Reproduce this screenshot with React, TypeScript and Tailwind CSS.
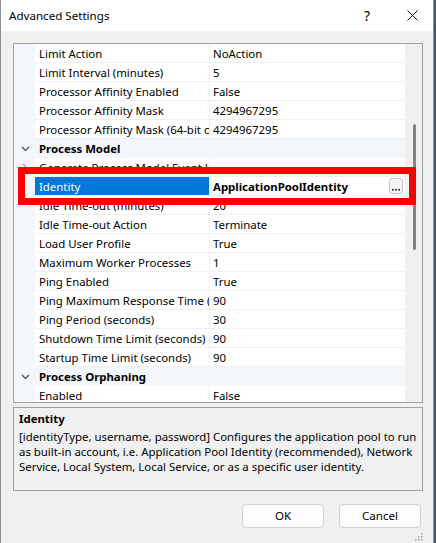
import React from "react";

type Row =
  | { kind: "cat"; name: string }
  | { kind: "prop"; name: string; value: string; collapsed?: boolean; selected?: boolean };

const rows: Row[] = [
  { kind: "prop", name: "Limit Action", value: "NoAction" },
  { kind: "prop", name: "Limit Interval (minutes)", value: "5" },
  { kind: "prop", name: "Processor Affinity Enabled", value: "False" },
  { kind: "prop", name: "Processor Affinity Mask", value: "4294967295" },
  { kind: "prop", name: "Processor Affinity Mask (64-bit option)", value: "4294967295" },
  { kind: "cat", name: "Process Model" },
  { kind: "prop", name: "Generate Process Model Event Log Entry", value: "", collapsed: true },
  { kind: "prop", name: "Identity", value: "ApplicationPoolIdentity", selected: true },
  { kind: "prop", name: "Idle Time-out (minutes)", value: "20" },
  { kind: "prop", name: "Idle Time-out Action", value: "Terminate" },
  { kind: "prop", name: "Load User Profile", value: "True" },
  { kind: "prop", name: "Maximum Worker Processes", value: "1" },
  { kind: "prop", name: "Ping Enabled", value: "True" },
  { kind: "prop", name: "Ping Maximum Response Time (seconds)", value: "90" },
  { kind: "prop", name: "Ping Period (seconds)", value: "30" },
  { kind: "prop", name: "Shutdown Time Limit (seconds)", value: "90" },
  { kind: "prop", name: "Startup Time Limit (seconds)", value: "90" },
  { kind: "cat", name: "Process Orphaning" },
  { kind: "prop", name: "Enabled", value: "False" },
];

function ChevronDown() {
  return (
    <svg width="9" height="6" viewBox="0 0 9 6" className="block">
      <polyline points="1,1 4.5,4.5 8,1" fill="none" stroke="#444" strokeWidth="1.2" />
    </svg>
  );
}

function ChevronRight() {
  return (
    <svg width="6" height="9" viewBox="0 0 6 9" className="block">
      <polyline points="1,1 4.5,4.5 1,8" fill="none" stroke="#999" strokeWidth="1.1" />
    </svg>
  );
}

function GridRow({ row }: { row: Row }) {
  if (row.kind === "cat") {
    return (
      <div className="flex h-[19px] shrink-0 bg-[#f3f6fb]">
        <div className="flex w-[21px] shrink-0 items-center justify-center pl-[1px] pt-[1px]">
          <ChevronDown />
        </div>
        <div className="flex items-center pl-[4px] pt-[1px] text-[11.4px] font-bold leading-none text-black">
          {row.name}
        </div>
      </div>
    );
  }
  return (
    <div className="flex h-[19px] shrink-0">
      <div className="flex w-[21px] shrink-0 items-center justify-center bg-[#f3f6fb] pl-[1px]">
        {row.collapsed ? <ChevronRight /> : null}
      </div>
      <div
        className={
          row.selected
            ? "flex w-[174px] shrink-0 items-center overflow-hidden whitespace-nowrap border-b border-b-[#f0f0f0] bg-[#0078d7] pl-[4px] pt-[1px] text-[11.4px] text-white"
            : "flex w-[174px] shrink-0 items-center overflow-hidden whitespace-nowrap border-b border-b-[#f0f0f0] pl-[4px] pt-[1px] text-[11.4px] text-black"
        }
      >
        {row.name}
      </div>
      <div className="w-[1px] shrink-0 bg-[#f0f0f0]" />
      <div className="flex min-w-0 flex-1 items-center justify-between overflow-hidden whitespace-nowrap border-b border-b-[#f0f0f0] pl-[3px] pr-[2px] text-[11.4px] text-black">
        <span className={row.selected ? "pt-[1px] font-bold" : "pt-[1px]"}>{row.value}</span>
        {row.selected ? (
          <div className="flex h-[16px] w-[14px] items-end justify-center rounded-[3px] border border-[#c4c4c4] bg-[#f5f5f5] pb-[2px]">
            <svg width="8" height="2" viewBox="0 0 8 2" className="block">
              <rect x="0" y="0" width="1.6" height="1.6" fill="#111" />
              <rect x="3.2" y="0" width="1.6" height="1.6" fill="#111" />
              <rect x="6.4" y="0" width="1.6" height="1.6" fill="#111" />
            </svg>
          </div>
        ) : null}
      </div>
    </div>
  );
}

export default function App() {
  return (
    <div className="relative h-[543px] w-[436px] overflow-hidden bg-[#4a5568] font-['Noto_Sans',sans-serif]">
      <div className="flex h-[543px] w-[434px] flex-col border-l border-r border-[#8f8f8f] bg-[#f0f0f0]">
        {/* Title bar */}
        <div className="flex h-[31px] shrink-0 items-center bg-white">
          <div className="pl-[8px] text-[11.6px] text-black">Advanced Settings</div>
          <div className="flex-1" />
          <div className="mr-[37px] text-[14px] text-black">?</div>
          <svg width="11" height="11" viewBox="0 0 11 11" className="mr-[15px] block">
            <line x1="0.5" y1="0.5" x2="10.5" y2="10.5" stroke="#111" strokeWidth="1" />
            <line x1="10.5" y1="0.5" x2="0.5" y2="10.5" stroke="#111" strokeWidth="1" />
          </svg>
        </div>

        {/* Body */}
        <div className="flex flex-1 flex-col pl-[12px] pr-[10px] pt-[12px]">
          {/* Property grid */}
          <div className="flex h-[360px] w-[410px] shrink-0 border border-[#a0a0a0] bg-white">
            <div className="flex w-[391px] shrink-0 flex-col overflow-hidden">
              {rows.map((r, i) => (
                <GridRow key={i} row={r} />
              ))}
            </div>
            <div className="flex w-[17px] shrink-0 flex-col bg-[#f0f0f0] pl-[8px] pt-[80px]">
              <div className="h-[126px] w-[3px] rounded-full bg-[#858585]" />
            </div>
          </div>

          {/* Description */}
          <div className="mt-[4px] h-[84px] w-[410px] shrink-0 border border-[#a0a0a0] bg-[#f0f0f0] pl-[5px] pt-[3px] text-[11.4px] text-black">
            <div className="font-bold leading-[15px]">Identity</div>
            <div className="mt-[3px] whitespace-nowrap leading-[15px]">
              [identityType, username, password] Configures the application pool to run
              <br />
              as built-in account, i.e. Application Pool Identity (recommended), Network
              <br />
              Service, Local System, Local Service, or as a specific user identity.
            </div>
          </div>

          {/* Buttons */}
          <div className="mt-[13px] flex w-[410px] justify-end gap-[15px] pr-[2px]">
            <button className="flex h-[24px] w-[82px] items-center justify-center rounded-[4px] border border-[#d0d0d0] bg-[#fdfdfd] text-[11.6px] text-black">
              OK
            </button>
            <button className="flex h-[24px] w-[82px] items-center justify-center rounded-[4px] border border-[#d0d0d0] bg-[#fdfdfd] text-[11.6px] text-black">
              Cancel
            </button>
          </div>

          <div className="flex flex-1 items-end justify-end pb-[2px]">
            <svg width="9" height="9" viewBox="0 0 9 9" className="block">
              <rect x="7" y="1" width="1.5" height="1.5" fill="#a0a0a0" />
              <rect x="4" y="4" width="1.5" height="1.5" fill="#a0a0a0" />
              <rect x="7" y="4" width="1.5" height="1.5" fill="#a0a0a0" />
              <rect x="1" y="7" width="1.5" height="1.5" fill="#a0a0a0" />
              <rect x="4" y="7" width="1.5" height="1.5" fill="#a0a0a0" />
              <rect x="7" y="7" width="1.5" height="1.5" fill="#a0a0a0" />
            </svg>
          </div>
        </div>
      </div>

      {/* Red highlight annotation */}
      <div className="absolute left-[18px] top-[167px] h-[38px] w-[398px] border-[7px] border-[#ff0000]" />
    </div>
  );
}
